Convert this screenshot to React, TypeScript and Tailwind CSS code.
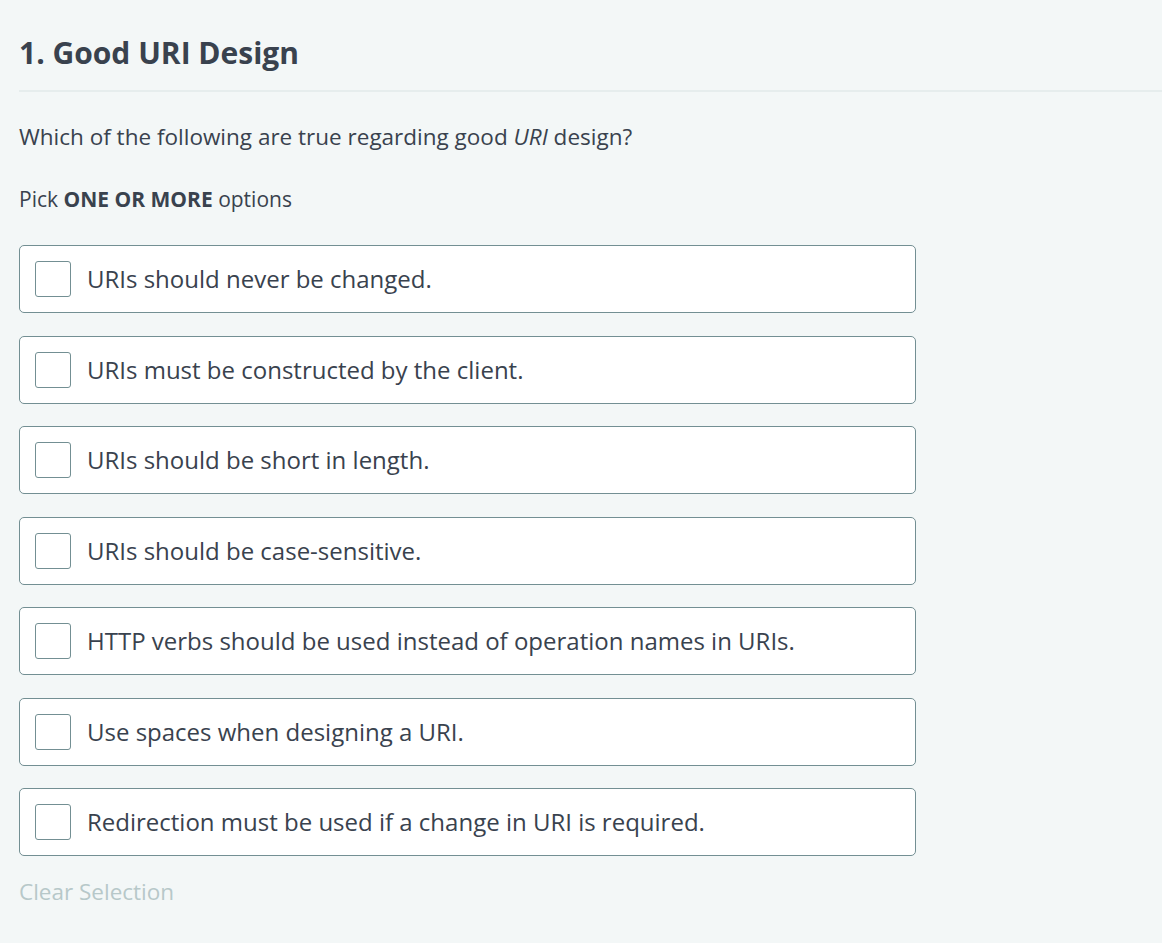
const options = [
  "URIs should never be changed.",
  "URIs must be constructed by the client.",
  "URIs should be short in length.",
  "URIs should be case-sensitive.",
  "HTTP verbs should be used instead of operation names in URIs.",
  "Use spaces when designing a URI.",
  "Redirection must be used if a change in URI is required.",
];

const App = () => {
  return (
    <div
      className="min-h-[943px] bg-[#f3f7f7] text-[#39424e] pl-[19px] pt-[30px]"
      style={{ fontFamily: '"Open Sans", sans-serif' }}
    >
      <h1 className="text-[30px] font-bold leading-[46px]">1. Good URI Design</h1>
      <div className="mt-[14px] h-[2px] bg-[#e6eded]" />
      <p className="mt-[29px] text-[22.5px] leading-[32px]">
        Which of the following are true regarding good <em>URI</em> design?
      </p>
      <p className="mt-[32px] text-[21px] leading-[28px]">
        Pick <strong>ONE OR MORE</strong> options
      </p>
      <div className="mt-[32px] flex w-[897px] flex-col gap-[22.5px]">
        {options.map((opt) => (
          <label
            key={opt}
            className="flex h-[68px] items-center gap-[16px] rounded-[5px] border border-[#738f93] bg-white px-[15px]"
          >
            <span className="h-[36px] w-[36px] shrink-0 rounded-[3px] border border-[#738f93] bg-white" />
            <span className="text-[24px] leading-[30px]">{opt}</span>
          </label>
        ))}
      </div>
      <button className="mt-[20px] text-[22.5px] leading-[32px] text-[#b7c8c9]">Clear Selection</button>
    </div>
  );
};

export default App;
